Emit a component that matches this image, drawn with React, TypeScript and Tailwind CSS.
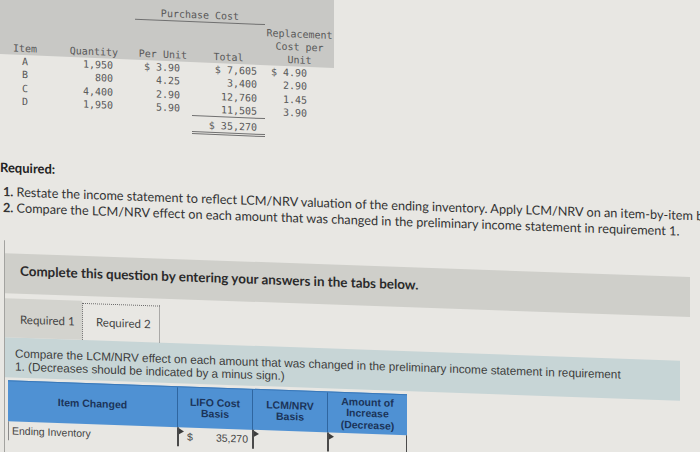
import React from "react";

const mono = "[font-family:'DejaVu_Sans_Mono',monospace]";
const lato = "[font-family:Lato,'Liberation_Sans',sans-serif]";
const arial = "[font-family:'Liberation_Sans',Arial,sans-serif]";

const rows = [
  { item: "A", qty: "1,950", per: "$ 3.90", total: "$ 7,605", rep: "$ 4.90" },
  { item: "B", qty: "800", per: "4.25", total: "3,400", rep: "2.90" },
  { item: "C", qty: "4,400", per: "2.90", total: "12,760", rep: "1.45" },
  { item: "D", qty: "1,950", per: "5.90", total: "11,505", rep: "3.90" },
];

function Flag() {
  return (
    <span className="absolute left-0 top-[1px] h-0 w-0 border-y-[3px] border-l-[5px] border-y-transparent border-l-[#3d3d3d]" />
  );
}

export default function App() {
  return (
    <div className="relative h-[452px] w-[700px] overflow-hidden bg-[#e8e7e3]">
      {/* Top data table */}
      <div className="flow-root h-[150px]">
        <div className={`origin-top-left skew-y-[2.4deg] ${mono} text-[10px] text-[#595959]`}>
          <div className="-mt-[24px] w-[334px] bg-[#c8c8c5] pt-[24px]">
            <div className="h-[14px]">
              <div className="ml-[135px] h-[14px] w-[130px] border-b border-[#707070] pt-[1px] text-center leading-[12px]">
                Purchase Cost
              </div>
            </div>
            <div className="flex h-[40px] items-end leading-[13px]">
              <div className="w-[50px] text-center">Item</div>
              <div className="w-[70px] pr-[2px] text-right">Quantity</div>
              <div className="w-[72px] pr-[5px] text-right">Per Unit</div>
              <div className="w-[73px] text-center">Total</div>
              <div className="w-[69px] text-center">
                Replacement
                <br />
                Cost per
                <br />
                Unit
              </div>
            </div>
          </div>
          <div className="flex leading-[13.3px]">
            <div className="w-[50px] text-center">
              {rows.map((r) => (
                <div key={r.item}>{r.item}</div>
              ))}
            </div>
            <div className="w-[70px] pr-[7px] text-right">
              {rows.map((r) => (
                <div key={r.item}>{r.qty}</div>
              ))}
            </div>
            <div className="w-[72px] pr-[12px] text-right">
              {rows.map((r) => (
                <div key={r.item}>{r.per}</div>
              ))}
            </div>
            <div className="w-[73px] text-right">
              <div className="pr-[8px]">
                {rows.map((r) => (
                  <div key={r.item}>{r.total}</div>
                ))}
              </div>
              <div className="border-b-[3px] border-t border-double border-[#707070] pr-[8px] pt-[2px]">
                $ 35,270
              </div>
            </div>
            <div className="w-[69px] pr-[27px] text-right">
              {rows.map((r) => (
                <div key={r.item}>{r.rep}</div>
              ))}
            </div>
          </div>
        </div>
      </div>

      {/* Lower part */}
      <div className="origin-top-left skew-y-[2deg]">
        <div className={`${lato} pt-[9px] text-[13px] font-bold leading-[16px] text-[#222]`}>Required:</div>
        <div className={`${lato} mt-[8px] whitespace-nowrap pl-[3px] text-[12.7px] leading-[16px] text-[#333]`}>
          <div>
            <b>1.</b> Restate the income statement to reflect LCM/NRV valuation of the ending inventory. Apply LCM/NRV on an item-by-item basis.
          </div>
          <div>
            <b>2.</b> Compare the LCM/NRV effect on each amount that was changed in the preliminary income statement in requirement 1.
          </div>
        </div>

        <div className="ml-[4px] mt-[25px] border-l border-[#a3a3a0] pb-[20px] pt-[13px]">
          <div
            className={`${lato} flex h-[40px] w-[685px] items-center bg-[#cfcfca] pb-[6px] pl-[15px] text-[13.4px] font-bold text-[#2a2a2a]`}
          >
            Complete this question by entering your answers in the tabs below.
          </div>

          <div className={`${lato} mt-[5px] flex h-[39px] text-[11.5px] leading-[14px] text-[#444]`}>
            <div className="h-[39px] w-[77px] bg-[#d3d3ce] pl-[15px] pt-[14px]">Required 1</div>
            <div className="mt-[2px] h-[37px] w-[78px] border border-b-0 border-dotted border-[#6d6d6d] pl-[13px] pt-[11px]">
              Required 2
            </div>
          </div>

          <div
            className={`${arial} h-[40px] w-[675px] bg-[#c7d5d6] px-[10px] pt-[9px] text-[11.75px] leading-[13px] text-[#3d3d3d]`}
          >
            <div className="whitespace-nowrap">
              Compare the LCM/NRV effect on each amount that was changed in the preliminary income statement in requirement
            </div>
            <div>1. (Decreases should be indicated by a minus sign.)</div>
          </div>

          <div className={`${arial} ml-[3px] mt-[3px] w-[399px]`}>
            <div className="flex h-[41px] border-t border-[#3a78b8] bg-[#4f91d3] text-[10.5px] font-bold leading-[11.5px] text-[#1b3459]">
              <div className="flex w-[169px] items-center justify-center text-center">Item Changed</div>
              <div className="flex w-[75px] items-center justify-center border-l border-[#2f66a0] text-center">
                LIFO Cost
                <br />
                Basis
              </div>
              <div className="flex w-[75px] items-center justify-center border-l border-[#2f66a0] text-center">
                LCM/NRV
                <br />
                Basis
              </div>
              <div className="flex w-[80px] items-center justify-center border-l border-[#2f66a0] text-center">
                Amount of
                <br />
                Increase
                <br />
                (Decrease)
              </div>
            </div>
            <div className="flex h-[19px] text-[10.5px] text-[#444]">
              <div className="flex w-[169px] items-center border-l border-[#8a8a8a] pl-[3px]">Ending Inventory</div>
              <div className="relative flex w-[75px] items-center justify-between border-l-2 border-[#4a4a4a] pl-[8px] pr-[4px]">
                <Flag />
                <span>$</span>
                <span>35,270</span>
              </div>
              <div className="relative w-[75px] border-l-2 border-[#4a4a4a]">
                <Flag />
              </div>
              <div className="relative w-[80px] border-l-2 border-r border-[#4a4a4a]">
                <Flag />
              </div>
            </div>
          </div>
        </div>
      </div>
    </div>
  );
}
